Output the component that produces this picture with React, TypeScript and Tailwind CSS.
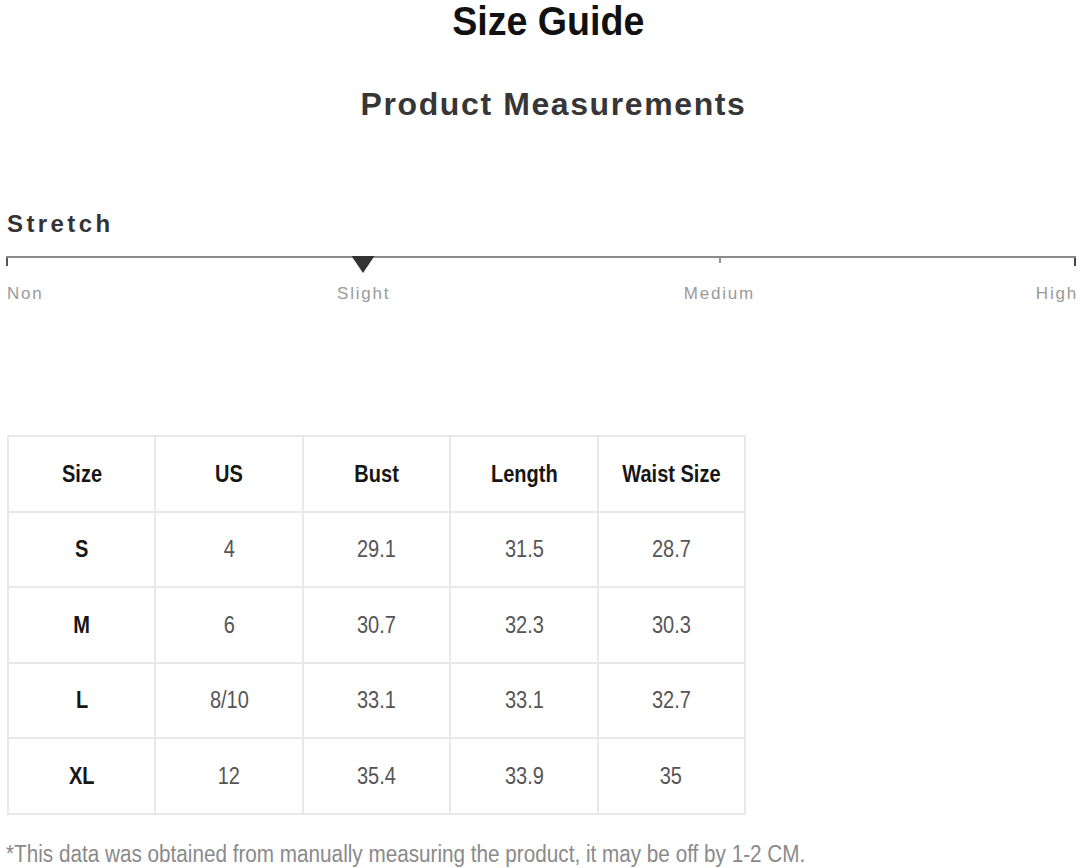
import React from "react";

const rows = [
  ["S", "4", "29.1", "31.5", "28.7"],
  ["M", "6", "30.7", "32.3", "30.3"],
  ["L", "8/10", "33.1", "33.1", "32.7"],
  ["XL", "12", "35.4", "33.9", "35"],
];
const headers = ["Size", "US", "Bust", "Length", "Waist Size"];

function Cell({ children, head }: { children: React.ReactNode; head?: boolean }) {
  return (
    <div className={`h-[77.6px] flex items-center justify-center border-2 border-[#e8e8e8] -ml-[2px] -mt-[2px] text-[23px] ${head ? "font-bold text-[#161616]" : "text-[#555]"}`}>
      <span className="inline-block scale-x-[0.87] whitespace-nowrap">{children}</span>
    </div>
  );
}

export default function App() {
  return (
    <div className="w-[1080px] h-[868px] bg-white overflow-hidden flex flex-col" style={{ fontFamily: '"Liberation Sans", Arial, sans-serif' }}>
      <h1 className="text-center text-[40px] leading-[42px] font-bold text-[#111] pl-[16px]">
        <span className="inline-block scale-x-[0.94]">Size Guide</span>
      </h1>
      <h2 className="text-center text-[32px] leading-[36px] font-bold text-[#363636] tracking-[1.6px] mt-[44px] pl-[27px]">Product Measurements</h2>

      <div className="mt-[89px] pl-[6px] pr-[4px] flex flex-col">
        <div className="text-[24px] leading-[26px] font-bold text-[#333] tracking-[3.4px] pl-[1px]">Stretch</div>
        <div className="relative mt-[19px]">
          <div className="grid grid-cols-3 h-[8px] border-t-2 border-[#8a8a8a]">
            <div className="border-l-2 border-[#555]" />
            <div />
            <div className="flex justify-between">
              <div className="w-[2px] h-[5px] bg-[#999]" />
              <div className="w-[2px] h-[8px] bg-[#444]" />
            </div>
          </div>
          <svg className="absolute left-1/3 -translate-x-1/2 top-[0px]" width="23" height="17" viewBox="0 0 23 17">
            <polygon points="0,0 23,0 11.5,17" fill="#333" />
          </svg>
        </div>
        <div className="grid grid-cols-6 mt-[21px] text-[17px] leading-[18px] text-[#9a9a9a] tracking-[1.8px]">
          <span className="text-left pl-[1px]">Non</span>
          <span className="col-span-2 text-center pl-[2px]">Slight</span>
          <span className="col-span-2 text-center">Medium</span>
          <span className="text-right mr-[-2px]">High</span>
        </div>
      </div>

      <div className="mt-[132px] ml-[9px] w-[737px] grid grid-cols-5 pt-[2px]">
        {headers.map((h) => (
          <Cell key={h} head>{h}</Cell>
        ))}
        {rows.map((r) =>
          r.map((c, i) => (
            <Cell key={r[0] + i} head={i === 0}>{c}</Cell>
          ))
        )}
      </div>

      <p className="mt-[26px] ml-[6px] text-[23px] leading-[26px] text-[#8a8a8a] whitespace-nowrap">
        <span className="inline-block origin-left scale-x-[0.9]">*This data was obtained from manually measuring the product, it may be off by 1-2 CM.</span>
      </p>
    </div>
  );
}
